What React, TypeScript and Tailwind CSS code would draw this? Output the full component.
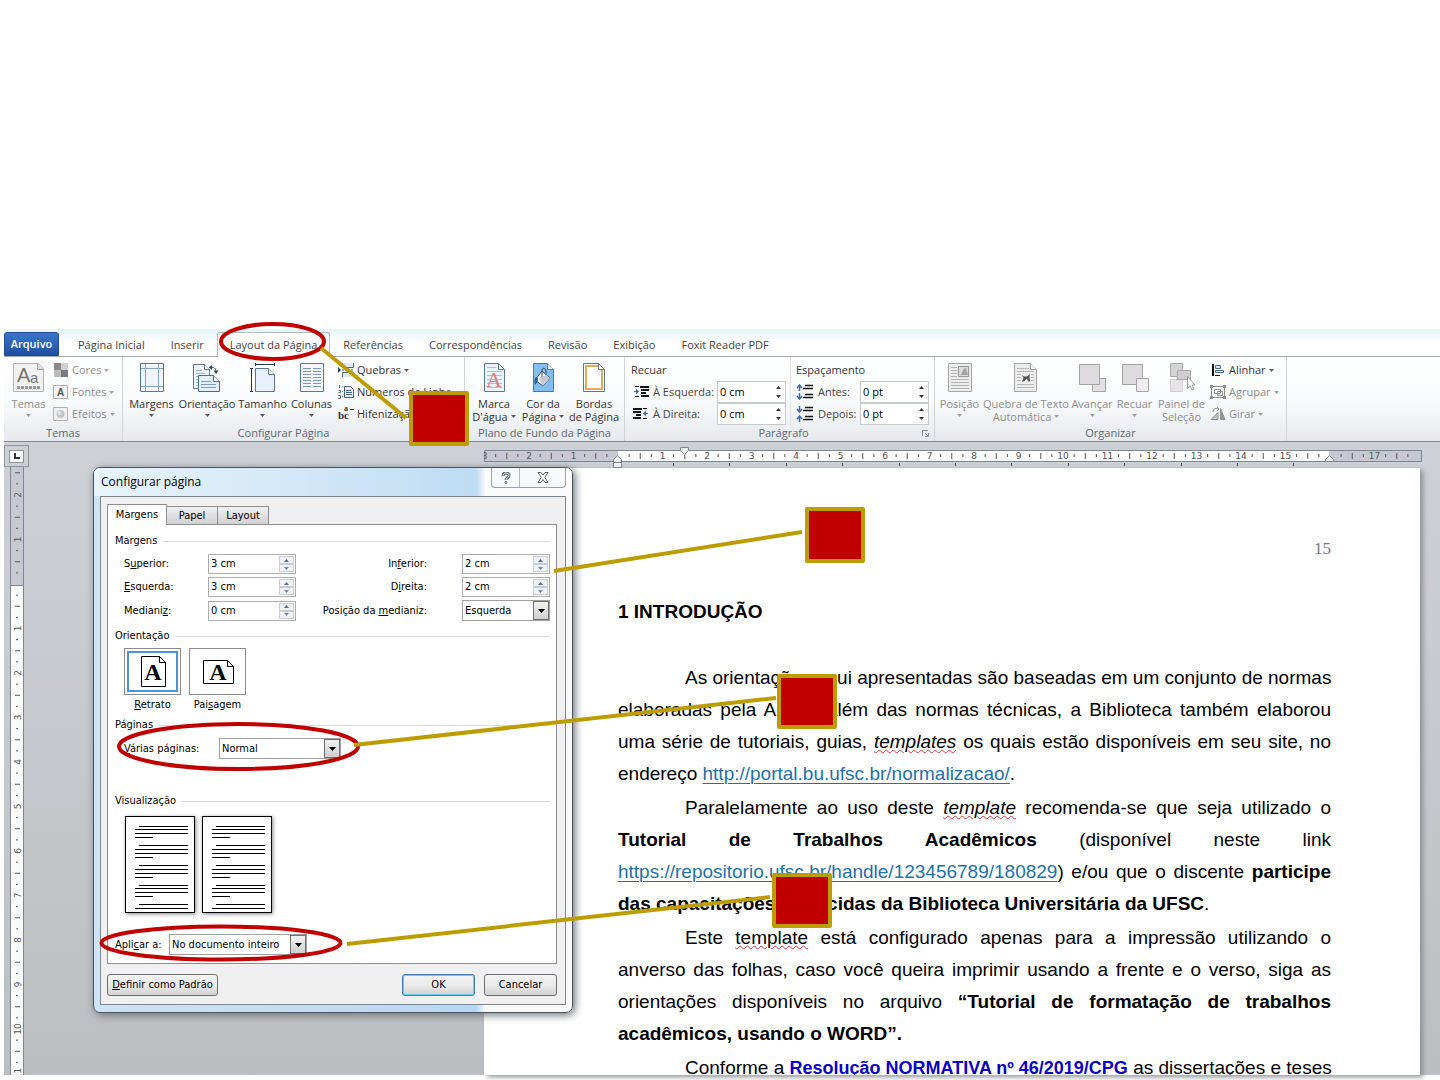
import { ReactNode, useState } from "react";
import clsx from "clsx";

const tabs = [
  "Página Inicial",
  "Inserir",
  "Layout da Página",
  "Referências",
  "Correspondências",
  "Revisão",
  "Exibição",
  "Foxit Reader PDF",
];

const Caret = () => (
  <svg width="5" height="3" viewBox="0 0 5 3" className="inline-block shrink-0 fill-current opacity-80">
    <path d="M0 0h5L2.500 3z" />
  </svg>
);

const Sheet = ({ children }: { children?: ReactNode }) => (
  <svg width="32" height="32" viewBox="0 0 32 32" fill="none">
    <path d="M6.500 1.500h14l6 6v22h-20z" fill="#eaf2fb" stroke="#5b7796" />
    {children}
    <path d="M20.500 1.500v6h6z" fill="#fff" stroke="#5b7796" />
  </svg>
);

const ThemeIcon = () => (
  <svg width="32" height="32" viewBox="0 0 32 32" fill="none">
    <path d="M.5 1.500h25l5 5v23h-30z" fill="#f1f1f1" stroke="#b4b4b4" />
    <path d="M24.500 1.500v6h6" fill="#ddd" stroke="#9c9c9c" />
    <text x="4" y="20" fontSize="20" fill="#777" fontFamily="Liberation Sans, sans-serif">A</text>
    <text x="17" y="21" fontSize="15" fill="#777" fontFamily="Liberation Sans, sans-serif">a</text>
    <path d="M4 25.500h24" stroke="#999" strokeWidth="3" strokeDasharray="3 1" />
  </svg>
);

const MarginsIcon = () => (
  <svg width="32" height="32" viewBox="0 0 32 32" fill="none">
    <path d="M4.500 1.500h23v28h-23z" fill="#eef5fd" stroke="#5b7796" />
    <path d="M9.500 2v27M22.500 2v27M5 6.500h22M5 24.500h22" stroke="#7fa3c9" />
  </svg>
);

const OrientationIcon = () => (
  <svg width="32" height="32" viewBox="0 0 32 32" fill="none">
    <path d="M2.500 2.500h11l5 5v19h-16z" fill="#eef5fd" stroke="#5b7796" />
    <path d="M13.500 2.500v5h5" fill="#fff" stroke="#5b7796" />
    <path d="M5 8.500h6M5 11.500h9M5 14.500h3M5 17.500h2M5 20.500h2M5 23.500h2" stroke="#9ab4d2" />
    <path d="M7.500 13.500h15l6 6v10h-21z" fill="#e4effb" stroke="#4a6a8e" />
    <path d="M22.500 13.500v6h6" fill="#fff" stroke="#4a6a8e" />
    <path d="M10 19.500h10M10 22.500h15M10 25.500h15" stroke="#7f9dc0" />
    <path d="M18 5.500c4-1 6 0 7 3" stroke="#223f63" />
    <path d="M21 3v5l-3-2.500zM22.500 8.500h5l-2.500 3.500z" fill="#223f63" />
  </svg>
);

const SizeIcon = () => (
  <svg width="32" height="32" viewBox="0 0 32 32" fill="none">
    <path d="M8.500 6.500h13l6 6v17h-19z" fill="#e9f2fc" stroke="#5b7796" />
    <path d="M21.500 6.500v6h6" fill="#fff" stroke="#5b7796" />
    <path d="M8.500 2.500h19M8.500 1v3M27.500 1v3M4.500 6v23M3 6.500h3M3 29.500h3" stroke="#22364f" />
  </svg>
);

const ColumnsIcon = () => (
  <svg width="32" height="32" viewBox="0 0 32 32" fill="none">
    <path d="M4.500 1.500h23v28h-23z" fill="#f3f8fe" stroke="#5b7796" />
    <path
      d="M7 6.500h8M7 9.500h8M7 12.500h8M7 15.500h8M7 18.500h8M7 21.500h8M7 24.500h8M17 6.500h8M17 9.500h8M17 12.500h8M17 15.500h8M17 18.500h8M17 21.500h8M17 24.500h8"
      stroke="#7d99bb"
    />
  </svg>
);

const WatermarkIcon = () => (
  <Sheet>
    <path d="M9 5.500h9M9 9.500h15M9 13.500h15M9 17.500h15M9 21.500h15M9 25.500h15" stroke="#aebfd3" />
    <text x="8" y="25" fontSize="22" fill="#dc7f7c" fontFamily="Liberation Serif, serif">A</text>
  </Sheet>
);

const PageColorIcon = () => (
  <svg width="32" height="32" viewBox="0 0 32 32" fill="none">
    <path d="M6.500 1.500h14l6 6v22h-20z" fill="#84bdf0" stroke="#4878ad" />
    <path d="M20.500 1.500v6h6" fill="#fff" stroke="#4878ad" />
    <path d="M15 9l8 7-7 8-8-6z" fill="#f3f5f8" stroke="#3c4c60" />
    <path d="M15 15V8c0-3 4-2 4 1v3" stroke="#3c4c60" />
    <path d="M9 15c-2 2-2 5-1 8 2-2 3-4 3-7z" fill="#2c5ea8" />
    <path d="M12 16l7-3 4 3-7 8z" fill="#c3cbd6" />
  </svg>
);

const BordersIcon = () => (
  <svg width="32" height="32" viewBox="0 0 32 32" fill="none">
    <path d="M5.500 1.500h15l6 6v22h-21z" fill="#fff" stroke="#5b7796" />
    <path d="M8 4h12l4 4.500V27H8z" fill="#fff" stroke="#e5a95a" strokeWidth="2" />
    <path d="M20.500 1.500v6h6z" fill="#fff" stroke="#5b7796" />
  </svg>
);

const PositionIcon = () => (
  <svg width="32" height="32" viewBox="0 0 32 32" fill="none">
    <path d="M4.500 1.500h23v28h-23z" fill="#ececec" stroke="#a5a5a5" />
    <path d="M7 5.500h6M7 8.500h6M7 11.500h6M7 14.500h6M7 17.500h18M7 20.500h18M7 23.500h18M7 26.500h18" stroke="#b3b3b3" />
    <path d="M14.500 4.500h10v10h-10z" fill="#ddd" stroke="#959595" />
    <path d="M16 13c3-2 2-6 6-7l2 7z" fill="#a3a3a3" />
  </svg>
);

const WrapIcon = () => (
  <svg width="32" height="32" viewBox="0 0 32 32" fill="none">
    <path d="M4.500 1.500h16l6 6v22h-22z" fill="#ececec" stroke="#a5a5a5" />
    <path d="M20.500 1.500v6h6" fill="#fff" stroke="#999" />
    <path d="M7 6.500h12M7 9.500h17M7 12.500h4M21 12.500h3M7 15.500h4M21 15.500h3M7 18.500h4M21 18.500h3M7 22.500h17M7 25.500h17" stroke="#b9b9b9" />
    <path d="M12 13l2 1.500h3l3-2.500-.5 3 .5 4.500h-2l-1-3-3 3h-2l1.500-3.500z" fill="#555" />
  </svg>
);

const ForwardIcon = () => (
  <svg width="32" height="32" viewBox="0 0 32 32" fill="none">
    <path d="M16.500 16.500h13v13h-13z" fill="#e3e0e3" stroke="#a3a3a3" />
    <path d="M3.500 2.500h20v20h-20z" fill="#dedade" stroke="#a3a3a3" />
  </svg>
);

const BackwardIcon = () => (
  <svg width="32" height="32" viewBox="0 0 32 32" fill="none">
    <path d="M3.500 2.500h20v20h-20z" fill="#dedade" stroke="#a3a3a3" />
    <path d="M17.500 16.500h12v13h-12z" fill="#efedef" stroke="#a3a3a3" />
  </svg>
);

const SelectionIcon = () => (
  <svg width="32" height="32" viewBox="0 0 32 32" fill="none">
    <path d="M4.500 1.500h12v13h-12z" fill="#d6d3d6" stroke="#a8a8a8" />
    <path d="M4.500 17.500h12v12h-12z" fill="#e5e3e5" stroke="#cfcfcf" />
    <path d="M11.500 8.500h13v9h-13z" fill="#d0cdd0" stroke="#a8a8a8" />
    <path d="M21.500 14.500v12l2.500-2.500 2 4 2-1-2-4h3z" fill="#fff" stroke="#999" />
  </svg>
);

const ColorsIcon = () => (
  <svg width="16" height="16" viewBox="0 0 16 16">
    <path d="M1 1h7v7H1z" fill="#8b8b8b" />
    <path d="M8 1h7v7H8z" fill="#cfcfcf" />
    <path d="M1 8h7v7H1z" fill="#bcbcbc" />
    <path d="M8 8h7v7H8z" fill="#7a7a7a" />
  </svg>
);

const FontsIcon = () => (
  <svg width="16" height="16" viewBox="0 0 16 16">
    <path d="M.5 1.500h14v13H.5z" fill="#f5f5f5" stroke="#b0b0b0" />
    <text x="4" y="12" fontSize="10" fontWeight="700" fill="#555" fontFamily="Liberation Sans, sans-serif">A</text>
  </svg>
);

const EffectsIcon = () => (
  <svg width="16" height="16" viewBox="0 0 16 16">
    <path d="M.5 1.500h14v13H.5z" fill="#f0f0f0" stroke="#b0b0b0" />
    <circle cx="7.500" cy="8" r="4" fill="#c4c4c4" />
    <circle cx="6.500" cy="7" r="2" fill="#e4e4e4" />
  </svg>
);

const BreaksIcon = () => (
  <svg width="16" height="16" viewBox="0 0 16 16" fill="none">
    <path d="M4.500 1v4.500h11V1M4.500 15v-4.500h11V15" fill="#dfeaf7" stroke="#45648a" />
    <path d="M4 8h12" stroke="#45648a" strokeDasharray="2 1" />
    <path d="M0 5l3 3-3 3z" fill="#22446e" />
  </svg>
);

const LineNumbersIcon = () => (
  <svg width="16" height="16" viewBox="0 0 16 16" fill="none">
    <path d="M6.500 2.500h6l3 3v8h-9z" fill="#e4eefa" stroke="#45648a" />
    <path d="M8 6.500h5M8 8.500h6M8 10.500h6" stroke="#45648a" />
    <path d="M1.500 1v3M.5 6.500h2v2h-2M.5 11.500h2v3h-2" stroke="#45648a" />
    <path d="M4 2.500h1M4 7.500h1M4 12.500h1" stroke="#45648a" />
  </svg>
);

const HyphenIcon = () => (
  <svg width="16" height="16" viewBox="0 0 16 16" fontFamily="Liberation Serif, serif" fontWeight="700" fill="#333">
    <text x="0" y="13" fontSize="11">bc</text>
    <text x="6" y="5" fontSize="8">a</text>
    <path d="M12 3h4v1h-4z" />
  </svg>
);

const IndentIcon = ({ right }: { right?: boolean }) => (
  <svg width="16" height="16" viewBox="0 0 16 16" fill="none">
    <g transform={right ? "matrix(-1 0 0 1 16 0)" : undefined}>
      <path d="M7 3h9M8 6h8M8 9h5M8 12h8" stroke="#111" strokeWidth="2" />
      <path d="M2 2.500h4M2 12.500h4" stroke="#111" />
      <path d="M1 7.500h5" stroke="#3f6ca8" />
      <path d="M3 4.500v6l3-3z" fill="#3f6ca8" />
    </g>
  </svg>
);

const SpacingIcon = ({ after }: { after?: boolean }) => (
  <svg width="18" height="16" viewBox="0 0 18 16" fill="none">
    <path d="M9 1.500h8M7 4.500h10M9 10.500h8M7 13.500h10" stroke="#111" strokeWidth="1.500" />
    {after ? (
      <path d="M3.500 0v5M1 3l2.500 3L6 3M3.500 16v-6M1 13l2.500-3L6 13" stroke="#3f6ca8" strokeWidth="1.500" />
    ) : (
      <path d="M3.500 7V1M1 4l2.500-3L6 4M3.500 9v6M1 12l2.500 3L6 12" stroke="#3f6ca8" strokeWidth="1.500" />
    )}
  </svg>
);

const AlignIcon = () => (
  <svg width="16" height="16" viewBox="0 0 16 16" fill="none">
    <path d="M3 2v12" stroke="#111" strokeWidth="2" />
    <path d="M5.500 3.500h5v3h-5zM5.500 8.500h8v2h-8z" fill="#d7e7e9" stroke="#4c6a80" />
    <path d="M5 13.500h5" stroke="#111" />
  </svg>
);

const GroupIcon = () => (
  <svg width="16" height="16" viewBox="0 0 16 16" fill="none" stroke="#8c8c8c">
    <path d="M1.500 2.500h13v11h-13zM4.500 5.500h6v4h-6zM7.500 7.500h5v4h-5z" />
    <path d="M0 1h3v3H0zM13 1h3v3h-3zM0 12h3v3H0zM13 12h3v3h-3z" fill="#8c8c8c" stroke="none" />
  </svg>
);

const RotateIcon = () => (
  <svg width="16" height="16" viewBox="0 0 16 16" fill="none">
    <path d="M1 13.500h7v-7z" fill="#c4c4c4" stroke="#8c8c8c" />
    <path d="M10.500 2.500v11h4.500z" fill="#999" stroke="#8c8c8c" />
    <path d="M3 6c0-3 2-4 5-3M7 1l2 2-2 2" stroke="#8c8c8c" />
  </svg>
);

type BigProps = { icon: ReactNode; lines: string[]; width: string; muted?: boolean; inline?: boolean; noCaret?: boolean };

const BigButton = ({ icon, lines, width, muted, inline, noCaret }: BigProps) => (
  <button
    type="button"
    className={clsx("flex shrink-0 flex-col items-center pt-[5px] leading-[13px] whitespace-nowrap", width, muted ? "text-[#8d8d8d]" : "text-[#333]")}
  >
    {icon}
    <span className="mt-[3px]">{lines[0]}</span>
    {lines[1] && (
      <span className="flex items-center gap-[3px]">
        {lines[1]}
        {inline && <Caret />}
      </span>
    )}
    {!inline && !noCaret && (
      <span className="mt-1 flex">
        <Caret />
      </span>
    )}
  </button>
);

const SmallButton = ({ icon, text, muted }: { icon: ReactNode; text: string; muted?: boolean }) => (
  <button
    type="button"
    className={clsx("flex h-[22px] items-center gap-[3px] whitespace-nowrap", muted ? "text-[#8d8d8d]" : "text-[#333]")}
  >
    {icon}
    <span>{text}</span>
    <Caret />
  </button>
);

type GroupProps = { title: string; width: string; children: ReactNode; launcher?: boolean; titleClass?: string };

const Group = ({ title, width, children, launcher, titleClass }: GroupProps) => (
  <section className={clsx("relative flex shrink-0 flex-col border-r border-[#cfd3d8]", width)}>
    <div className="flex h-[69px]">{children}</div>
    <h2 className={clsx("text-center leading-[14px] text-[#5f6874]", titleClass)}>{title}</h2>
    {launcher && (
      <svg width="7" height="7" viewBox="0 0 7 7" fill="none" stroke="#8a929c" className="absolute right-[5px] bottom-1">
        <path d="M.5 6V.5H6M3 3l3 3M6.500 3v3.500H3" />
      </svg>
    )}
  </section>
);

const RibbonField = ({ id, icon, label, value, labelWidth }: { id: string; icon: ReactNode; label: string; value: string; labelWidth: string }) => {
  const [current, setCurrent] = useState(value);
  return (
    <div className="flex h-[22px] items-center">
      {icon}
      <label htmlFor={id} className={clsx("ml-1 whitespace-nowrap text-[#444]", labelWidth)}>
        {label}
      </label>
      <span className="flex h-[22px] w-[69px] items-center border border-[#c6c9cd] bg-white">
        <input
          id={id}
          value={current}
          onChange={(e) => setCurrent(e.target.value)}
          className="w-0 flex-1 bg-transparent pl-[2px] text-black outline-none"
        />
        <span className="flex flex-col items-center gap-[6px] pr-1 text-[#333]">
          <button type="button" aria-label={`Aumentar ${label}`}>
            <svg width="5" height="3" viewBox="0 0 5 3" className="fill-current">
              <path d="M0 3h5L2.500 0z" />
            </svg>
          </button>
          <button type="button" aria-label={`Diminuir ${label}`}>
            <svg width="5" height="3" viewBox="0 0 5 3" className="fill-current">
              <path d="M0 0h5L2.500 3z" />
            </svg>
          </button>
        </span>
      </span>
    </div>
  );
};

const Ribbon = () => (
  <div className="flex h-[85px] shrink-0 border-b border-[#838a92] bg-linear-to-b from-white via-[#fafbfc] to-[#e6e9ed]">
    <Group title="Temas" width="w-[119px]">
      <BigButton icon={<ThemeIcon />} lines={["Temas"]} width="w-[49px]" muted />
      <div className="pt-[2px]">
        <SmallButton icon={<ColorsIcon />} text="Cores" muted />
        <SmallButton icon={<FontsIcon />} text="Fontes" muted />
        <SmallButton icon={<EffectsIcon />} text="Efeitos" muted />
      </div>
    </Group>
    <Group title="Configurar Página" width="w-[342px]" titleClass="pr-5">
      <div className="flex pl-[3px]">
        <BigButton icon={<MarginsIcon />} lines={["Margens"]} width="w-[51px]" />
        <BigButton icon={<OrientationIcon />} lines={["Orientação"]} width="w-[60px]" />
        <BigButton icon={<SizeIcon />} lines={["Tamanho"]} width="w-[51px]" />
        <BigButton icon={<ColumnsIcon />} lines={["Colunas"]} width="w-[47px]" />
      </div>
      <div className="pt-[2px] pl-[3px]">
        <SmallButton icon={<BreaksIcon />} text="Quebras" />
        <SmallButton icon={<LineNumbersIcon />} text="Números de Linha" />
        <SmallButton icon={<HyphenIcon />} text="Hifenização" />
      </div>
    </Group>
    <Group title="Plano de Fundo da Página" width="w-[160px]">
      <div className="flex pl-1">
        <BigButton icon={<WatermarkIcon />} lines={["Marca", "D'água"]} width="w-[50px]" inline />
        <BigButton icon={<PageColorIcon />} lines={["Cor da", "Página"]} width="w-[48px]" inline />
        <BigButton icon={<BordersIcon />} lines={["Bordas", "de Página"]} width="w-[54px]" noCaret />
      </div>
    </Group>
    <Group title="Parágrafo" width="w-[310px]" titleClass="pl-2" launcher>
      <div className="border-r border-[#dcdfe3] pt-[2px] pr-1 pl-[6px] text-[#333]">
        <p className="leading-[22px]">Recuar</p>
        <div className="pl-[2px]">
          <RibbonField id="indent-left" icon={<IndentIcon />} label="À Esquerda:" value="0 cm" labelWidth="w-[64px]" />
          <RibbonField id="indent-right" icon={<IndentIcon right />} label="À Direita:" value="0 cm" labelWidth="w-[64px]" />
        </div>
      </div>
      <div className="pt-[2px] pl-[5px] text-[#333]">
        <p className="leading-[22px]">Espaçamento</p>
        <RibbonField id="space-before" icon={<SpacingIcon />} label="Antes:" value="0 pt" labelWidth="w-[42px]" />
        <RibbonField id="space-after" icon={<SpacingIcon after />} label="Depois:" value="0 pt" labelWidth="w-[42px]" />
      </div>
    </Group>
    <Group title="Organizar" width="w-[352px]">
      <div className="flex pl-[2px]">
        <BigButton icon={<PositionIcon />} lines={["Posição"]} width="w-[45px]" muted />
        <BigButton icon={<WrapIcon />} lines={["Quebra de Texto", "Automática"]} width="w-[88px]" muted inline />
        <BigButton icon={<ForwardIcon />} lines={["Avançar"]} width="w-[44px]" muted />
        <BigButton icon={<BackwardIcon />} lines={["Recuar"]} width="w-[41px]" muted />
        <BigButton icon={<SelectionIcon />} lines={["Painel de", "Seleção"]} width="w-[53px]" muted noCaret />
      </div>
      <div className="pt-[2px] pl-[2px]">
        <SmallButton icon={<AlignIcon />} text="Alinhar" />
        <SmallButton icon={<GroupIcon />} text="Agrupar" muted />
        <SmallButton icon={<RotateIcon />} text="Girar" muted />
      </div>
    </Group>
  </div>
);

const UNIT = 44.5;
const quarters = [0.25, 0.5, 0.75];

const HorizontalRuler = () => (
  <svg width="938" height="26" viewBox="0 0 938 26" fontFamily="DejaVu Sans, sans-serif" fontSize="9" fill="#555" textAnchor="middle">
    <path d="M.5 8.500h937v11H.5z" fill="#c6cad0" stroke="#7d8791" />
    <path d="M134 9h711v10H134z" fill="#fafbfb" />
    {Array.from({ length: 21 }, (_, i) => i - 3).map((n) => {
      const x = 134 + n * UNIT;
      return (
        <g key={n}>
          {n !== 0 && n !== 16 && n < 18 && (
            <text x={x} y="17">
              {Math.abs(n)}
            </text>
          )}
          {quarters.map((q) => (
            <path key={q} d={q === 0.5 ? `M${x + UNIT * q} 11v6` : `M${x + UNIT * q} 12v3`} stroke="#555" />
          ))}
        </g>
      );
    })}
    {Array.from({ length: 12 }, (_, i) => (
      <path key={i} d={`M${189.500 + Math.round(i * 56.4)} 21v3`} stroke="#444" />
    ))}
    <g fill="#f1f1f1" stroke="#7d8791">
      <path d="M129.500 25.500v-5h8v5zM129.500 20.500v-3l4-4 4 4v3z" />
      <path d="M196.500 5.500h8v3l-4 4-4-4z" />
      <path d="M841.500 19.500v-2l4-4 4 4v2z" />
    </g>
  </svg>
);

const VerticalRuler = () => (
  <svg width="14" height="608" viewBox="0 0 14 608" fontFamily="DejaVu Sans, sans-serif" fontSize="9" fill="#555" textAnchor="middle">
    <path d="M.5 -1h13v611H.5z" fill="#c6cad0" stroke="#7d8791" />
    <path d="M1 118h12v492H1z" fill="#fafbfb" />
    <path d="M0 118.500h14" stroke="#7d8791" />
    {Array.from({ length: 15 }, (_, i) => i - 3).map((n) => {
      const y = 117 + n * UNIT;
      return (
        <g key={n}>
          {n !== 0 && n > -3 && (
            <text transform={`translate(11 ${y}) rotate(-90)`}>{Math.abs(n)}</text>
          )}
          {quarters.map((q) => (
            <path key={q} d={q === 0.5 ? `M5 ${y + UNIT * q}h5` : `M6 ${y + UNIT * q}h2`} stroke="#555" />
          ))}
        </g>
      );
    })}
  </svg>
);

const Line = ({ children, indent, last }: { children: ReactNode; indent?: boolean; last?: boolean }) => (
  <span
    className={clsx("block whitespace-nowrap", indent && "pl-[67px]", !last && "text-justify [text-align-last:justify]")}
  >
    {children}
  </span>
);

const Misspelled = ({ children, italic }: { children: ReactNode; italic?: boolean }) => (
  <span className={clsx("underline decoration-[#d23b3b] decoration-wavy decoration-1 underline-offset-1", italic && "italic")}>
    {children}
  </span>
);

const DocumentPage = () => (
  <article className="min-h-0 flex-1 overflow-hidden bg-white pt-[68px] pr-[89px] pl-[134px] font-['Liberation_Sans',Arial,sans-serif] text-[19px] leading-8 text-black shadow-[3px_2px_5px_#8d9095]">
    <p className="text-right font-['Liberation_Serif',serif] text-[17px] leading-[26px] text-[#777]">15</p>
    <h1 className="mt-[34px] font-bold">1 INTRODUÇÃO</h1>
    <div className="mt-[34px] flex flex-col gap-[2px]">
      <p>
        <Line indent>As orientações aqui apresentadas são baseadas em um conjunto de normas</Line>
        <Line>elaboradas pela ABNT. Além das normas técnicas, a Biblioteca também elaborou</Line>
        <Line>
          uma série de tutoriais, guias, <Misspelled italic>templates</Misspelled> os quais estão disponíveis em seu site, no
        </Line>
        <Line last>
          endereço <a href="#portal" className="text-[#1f71a6] underline decoration-1 underline-offset-3">http://portal.bu.ufsc.br/normalizacao/</a>.
        </Line>
      </p>
      <p>
        <Line indent>
          Paralelamente ao uso deste <Misspelled italic>template</Misspelled> recomenda-se que seja utilizado o
        </Line>
        <Line>
          <b>Tutorial de Trabalhos Acadêmicos</b> (disponível neste link
        </Line>
        <Line>
          <a href="#repositorio" className="text-[#1f71a6] underline decoration-1 underline-offset-3">https://repositorio.ufsc.br/handle/123456789/180829</a>) e/ou que o discente <b>participe</b>
        </Line>
        <Line last>
          <b>das capacitações oferecidas da Biblioteca Universitária da UFSC</b>.
        </Line>
      </p>
      <p>
        <Line indent>
          Este <Misspelled>template</Misspelled> está configurado apenas para a impressão utilizando o
        </Line>
        <Line>anverso das folhas, caso você queira imprimir usando a frente e o verso, siga as</Line>
        <Line>
          orientações disponíveis no arquivo <b>“Tutorial de formatação de trabalhos</b>
        </Line>
        <Line last>
          <b>acadêmicos, usando o WORD”.</b>
        </Line>
      </p>
      <p>
        <Line indent>
          Conforme a <b className="text-[18px] text-[#0a00c4]">Resolução NORMATIVA nº 46/2019/CPG</b> as dissertações e teses
        </Line>
      </p>
    </div>
  </article>
);

const Section = ({ title, children, className }: { title: string; children: ReactNode; className?: string }) => (
  <fieldset className={className}>
    <legend className="flex w-full items-center gap-[6px] leading-4">
      {title}
      <span className="h-px flex-1 bg-[#d9d9d9]" />
    </legend>
    {children}
  </fieldset>
);

const Stepper = ({ id, value }: { id: string; value: string }) => {
  const [current, setCurrent] = useState(value);
  return (
    <span className="flex h-5 w-[88px] border border-[#abadb3] bg-white p-px">
      <input id={id} value={current} onChange={(e) => setCurrent(e.target.value)} className="w-0 flex-1 pl-px outline-none" />
      <span className="flex w-[15px] flex-col text-[#5a6a94]">
        <button type="button" aria-label="Aumentar" className="flex flex-1 items-center justify-center border border-[#c9ccd4] bg-[#f0f1f4]">
          <svg width="5" height="3" viewBox="0 0 5 3" className="fill-current">
            <path d="M0 3h5L2.500 0z" />
          </svg>
        </button>
        <button type="button" aria-label="Diminuir" className="flex flex-1 items-center justify-center border border-[#c9ccd4] bg-[#f0f1f4]">
          <Caret />
        </button>
      </span>
    </span>
  );
};

const Picker = ({ id, value, width }: { id: string; value: string; width: string }) => (
  <span className={clsx("relative flex h-[21px] border border-[#a0a0a0] bg-white", width)}>
    <select id={id} defaultValue={value} className="w-full appearance-none pl-[2px] outline-none">
      <option>{value}</option>
    </select>
    <span className="pointer-events-none absolute inset-y-0 right-0 flex w-4 items-center justify-center border border-[#707070] bg-linear-to-b from-[#f2f2f2] to-[#cfcfcf] text-black">
      <svg width="7" height="4" viewBox="0 0 7 4" className="fill-current">
        <path d="M0 0h7L3.500 4z" />
      </svg>
    </span>
  </span>
);

const previewLines = [
  [14, 10], [10, 13], [10, 17], [10, 21],
  [14, 29], [10, 33], [10, 37], [10, 41],
  [14, 49], [10, 53], [10, 57], [10, 61],
  [14, 69], [10, 72], [10, 76], [10, 80],
  [14, 88], [10, 92],
];

const PreviewPage = () => (
  <svg width="70" height="97" viewBox="1 1 68 95" className="border border-black bg-white shadow-[1px_1px_4px_#888]">
    {previewLines.map(([x, y], i) => (
      <path key={y} d={`M${x} ${y}.5H${i % 4 === 3 ? 28 : 63}`} stroke="#000" />
    ))}
  </svg>
);

const OrientationOption = ({ label, landscape, selected, onSelect }: { label: ReactNode; landscape?: boolean; selected: boolean; onSelect: () => void }) => (
  <button type="button" onClick={onSelect} className="flex flex-col items-center">
    <span className="flex h-[47px] w-[57px] border border-[#8a8a8a] bg-white p-[2px]">
      <span className={clsx("flex flex-1 items-center justify-center", selected && "border-2 border-[#4c93d9]")}>
        <svg width="32" height="32" viewBox="0 0 32 32" fill="none" stroke="#000">
          {landscape ? (
            <path d="M1.500 4.500h24l6 6v17h-30zM25.500 4.500v6h6" />
          ) : (
            <path d="M4.500 .5h18l6 6v24h-24zM22.500 .5v6h6" />
          )}
          <text
            x="16"
            y="24"
            fontSize="24"
            fontWeight="700"
            textAnchor="middle"
            fill="#000"
            stroke="none"
            fontFamily="Liberation Serif, serif"
          >
            A
          </text>
        </svg>
      </span>
    </span>
    <span className="mt-[2px] leading-4">{label}</span>
  </button>
);

const dialogButton = "h-[22px] rounded-[3px] border bg-linear-to-b from-[#f3f3f3] via-[#ebebeb] to-[#d2d2d2]";

const PageSetupDialog = () => {
  const [landscape, setLandscape] = useState(false);
  return (
    <div
      role="dialog"
      aria-label="Configurar página"
      className="absolute top-[25px] left-[89px] flex w-[480px] flex-col rounded-[7px] border border-[#46545f] bg-linear-to-r from-[#cfe3f6] from-0% via-[#b9d7f1] via-80% to-[#fafafa] to-82% px-[6px] pb-[7px] shadow-[2px_2px_8px_#6b6f74] font-['DejaVu_Sans_Condensed','DejaVu_Sans',sans-serif] text-[11px] leading-4 text-black"
    >
      <div className="absolute inset-x-0 top-0 h-7 rounded-t-[6px] bg-linear-to-r from-[#e8f4fc] from-0% via-[#bfdcf3] via-80% to-[#fbfbfb] to-82%" />
      <header className="relative flex h-7 justify-between">
        <h2 className="pl-[1px] font-['Open_Sans',sans-serif] text-[12px] leading-7">Configurar página</h2>
        <div className="flex h-5 w-[75px] rounded-b-[4px] border border-t-0 border-[#9aa0a6] bg-[#f8f9fa]">
          <button type="button" aria-label="Ajuda" className="flex w-7 items-center justify-center border-r border-[#b5babf]">
            <svg width="10" height="12" viewBox="0 0 10 12" fill="none">
              <path d="M2 4c0-4 6-4 6-.5C8 6 5 5.500 5 8" stroke="#555e6b" strokeWidth="3" />
              <path d="M2 4c0-4 6-4 6-.5C8 6 5 5.500 5 8" stroke="#fff" />
              <circle cx="5" cy="10.500" r="1" fill="#fff" stroke="#555e6b" />
            </svg>
          </button>
          <button type="button" aria-label="Fechar" className="flex flex-1 items-center justify-center">
            <svg width="12" height="11" viewBox="0 0 12 11" fill="none">
              <path d="M1 .5h3l2 2.500 2-2.500h3L7.800 5.300 11 10.500H8L6 7.500l-2 3H1l3.200-5.200z" fill="#fff" stroke="#555e6b" />
            </svg>
          </button>
        </div>
      </header>
      <div className="relative border border-[#7b868f] bg-[#f0f0f0] pt-[7px] pr-2 pb-2 pl-[6px]">
        <div role="tablist" className="flex h-5 items-end">
          <button type="button" role="tab" aria-selected="true" className="relative -mb-px h-[21px] w-[60px] border border-b-0 border-[#8c8e94] bg-white">
            Margens
          </button>
          <button type="button" role="tab" aria-selected="false" className="h-[18px] w-[51px] border border-b-0 border-l-0 border-[#8c8e94] bg-linear-to-b from-[#f1f1f1] to-[#d0d0d0]">
            Papel
          </button>
          <button type="button" role="tab" aria-selected="false" className="h-[18px] w-[51px] border border-b-0 border-l-0 border-[#8c8e94] bg-linear-to-b from-[#f1f1f1] to-[#d0d0d0]">
            Layout
          </button>
        </div>
        <div className="border border-[#8c8e94] bg-white pt-2 pr-[6px] pb-2 pl-[7px]">
          <Section title="Margens">
            <div className="grid grid-cols-[84px_88px_1fr_88px] items-center gap-y-[3px] pt-[5px] pl-[9px]">
              <label htmlFor="top">S<u>u</u>perior:</label>
              <Stepper id="top" value="3 cm" />
              <label htmlFor="bottom" className="pr-[35px] text-right">In<u>f</u>erior:</label>
              <Stepper id="bottom" value="2 cm" />
              <label htmlFor="left"><u>E</u>squerda:</label>
              <Stepper id="left" value="3 cm" />
              <label htmlFor="right" className="pr-[35px] text-right">D<u>i</u>reita:</label>
              <Stepper id="right" value="2 cm" />
              <label htmlFor="gutter">Mediani<u>z</u>:</label>
              <Stepper id="gutter" value="0 cm" />
              <label htmlFor="gutter-position" className="pr-[35px] text-right">Posição da <u>m</u>edianiz:</label>
              <Picker id="gutter-position" value="Esquerda" width="w-[88px]" />
            </div>
          </Section>
          <Section title="Orientação" className="mt-[7px]">
            <div className="flex gap-2 pt-1 pl-[9px]">
              <OrientationOption label={<><u>R</u>etrato</>} selected={!landscape} onSelect={() => setLandscape(false)} />
              <OrientationOption label={<>Pai<u>s</u>agem</>} landscape selected={landscape} onSelect={() => setLandscape(true)} />
            </div>
          </Section>
          <Section title="Páginas" className="mt-1">
            <div className="flex items-center pt-[5px] pl-[9px]">
              <label htmlFor="pages" className="w-[95px]"><u>V</u>árias páginas:</label>
              <Picker id="pages" value="Normal" width="w-[122px]" />
            </div>
          </Section>
          <Section title="Visualização" className="mt-[34px]">
            <div className="flex gap-[7px] pt-[7px] pl-[10px]">
              <PreviewPage />
              <PreviewPage />
            </div>
          </Section>
          <div className="mt-[21px] flex items-center">
            <label htmlFor="apply" className="w-[54px]">Apli<u>c</u>ar a:</label>
            <Picker id="apply" value="No documento inteiro" width="w-[138px]" />
          </div>
        </div>
        <footer className="mt-[10px] flex gap-[9px]">
          <button type="button" className={clsx(dialogButton, "mr-auto w-[111px] border-[#707070]")}>
            <u>D</u>efinir como Padrão
          </button>
          <button type="button" className={clsx(dialogButton, "w-[73px] border-[#3c7fb1] inset-ring inset-ring-[#5fd0ea]")}>
            OK
          </button>
          <button type="button" className={clsx(dialogButton, "w-[73px] border-[#707070]")}>
            Cancelar
          </button>
        </footer>
      </div>
    </div>
  );
};

const Annotations = () => (
  <svg width="1440" height="1080" viewBox="0 0 1440 1080" fill="none" strokeWidth="4" className="pointer-events-none absolute top-0 left-0">
    <g stroke="#c00000">
      <ellipse cx="272.500" cy="341.500" rx="51.500" ry="17.500" />
      <ellipse cx="238.500" cy="746.500" rx="119.500" ry="22.500" />
      <ellipse cx="221" cy="943" rx="119.500" ry="16.500" />
    </g>
    <path d="M321 348L406 418M554 571L802 532M354 745L776 698M347 944L770 897" stroke="#bc9d00" />
    <g fill="#c00000" stroke="#bc9d00" strokeLinejoin="round">
      <path d="M411 393h56v51h-56zM807 509h56v52h-56zM779 676h56v51h-56zM774 875h56v51h-56z" />
    </g>
  </svg>
);

const App = () => {
  const [active, setActive] = useState("Layout da Página");

  return (
    <div className="relative flex h-screen flex-col overflow-hidden bg-white pt-[329px] pb-[5px] pl-1 font-['Open_Sans',sans-serif] text-[11px]">
      <nav className="flex h-7 shrink-0 items-end border-b border-[#a3a9b0] bg-linear-to-b from-[#e3f5f7] to-white to-50% text-[#3f3f3f]">
        <button type="button" className="mr-[6px] h-6 w-[55px] rounded-t-[3px] border border-[#1c4a94] bg-linear-to-b from-[#3b77c8] to-[#1e4fa3] font-semibold text-white">
          Arquivo
        </button>
        {tabs.map((tab) => (
          <button
            key={tab}
            type="button"
            onClick={() => setActive(tab)}
            className={clsx(
              "rounded-t-[3px] border border-b-0 px-3 whitespace-nowrap",
              active === tab ? "relative -mb-px h-[25px] border-[#b4b9bf] bg-white" : "h-[23px] border-transparent"
            )}
          >
            {tab}
          </button>
        ))}
      </nav>
      <Ribbon />
      <main className="relative flex min-h-0 flex-1 bg-linear-to-b from-[#cdd1d6] to-[#bdbec2]">
        <div className="flex w-[25px] shrink-0 flex-col items-center overflow-hidden pt-[3px]">
          <div className="flex h-[22px] w-[25px] shrink-0 items-center justify-center border border-[#8b939b]">
            <span className="flex h-[13px] w-[15px] items-center justify-center border border-[#8b939b] bg-white">
              <span className="h-[6px] w-[6px] border-b-2 border-l-2 border-[#333]" />
            </span>
          </div>
          <VerticalRuler />
        </div>
        <div className="mr-5 ml-[455px] flex min-w-0 flex-1 flex-col">
          <div className="h-[26px] shrink-0">
            <HorizontalRuler />
          </div>
          <DocumentPage />
        </div>
        <PageSetupDialog />
      </main>
      <Annotations />
    </div>
  );
};

export default App;
